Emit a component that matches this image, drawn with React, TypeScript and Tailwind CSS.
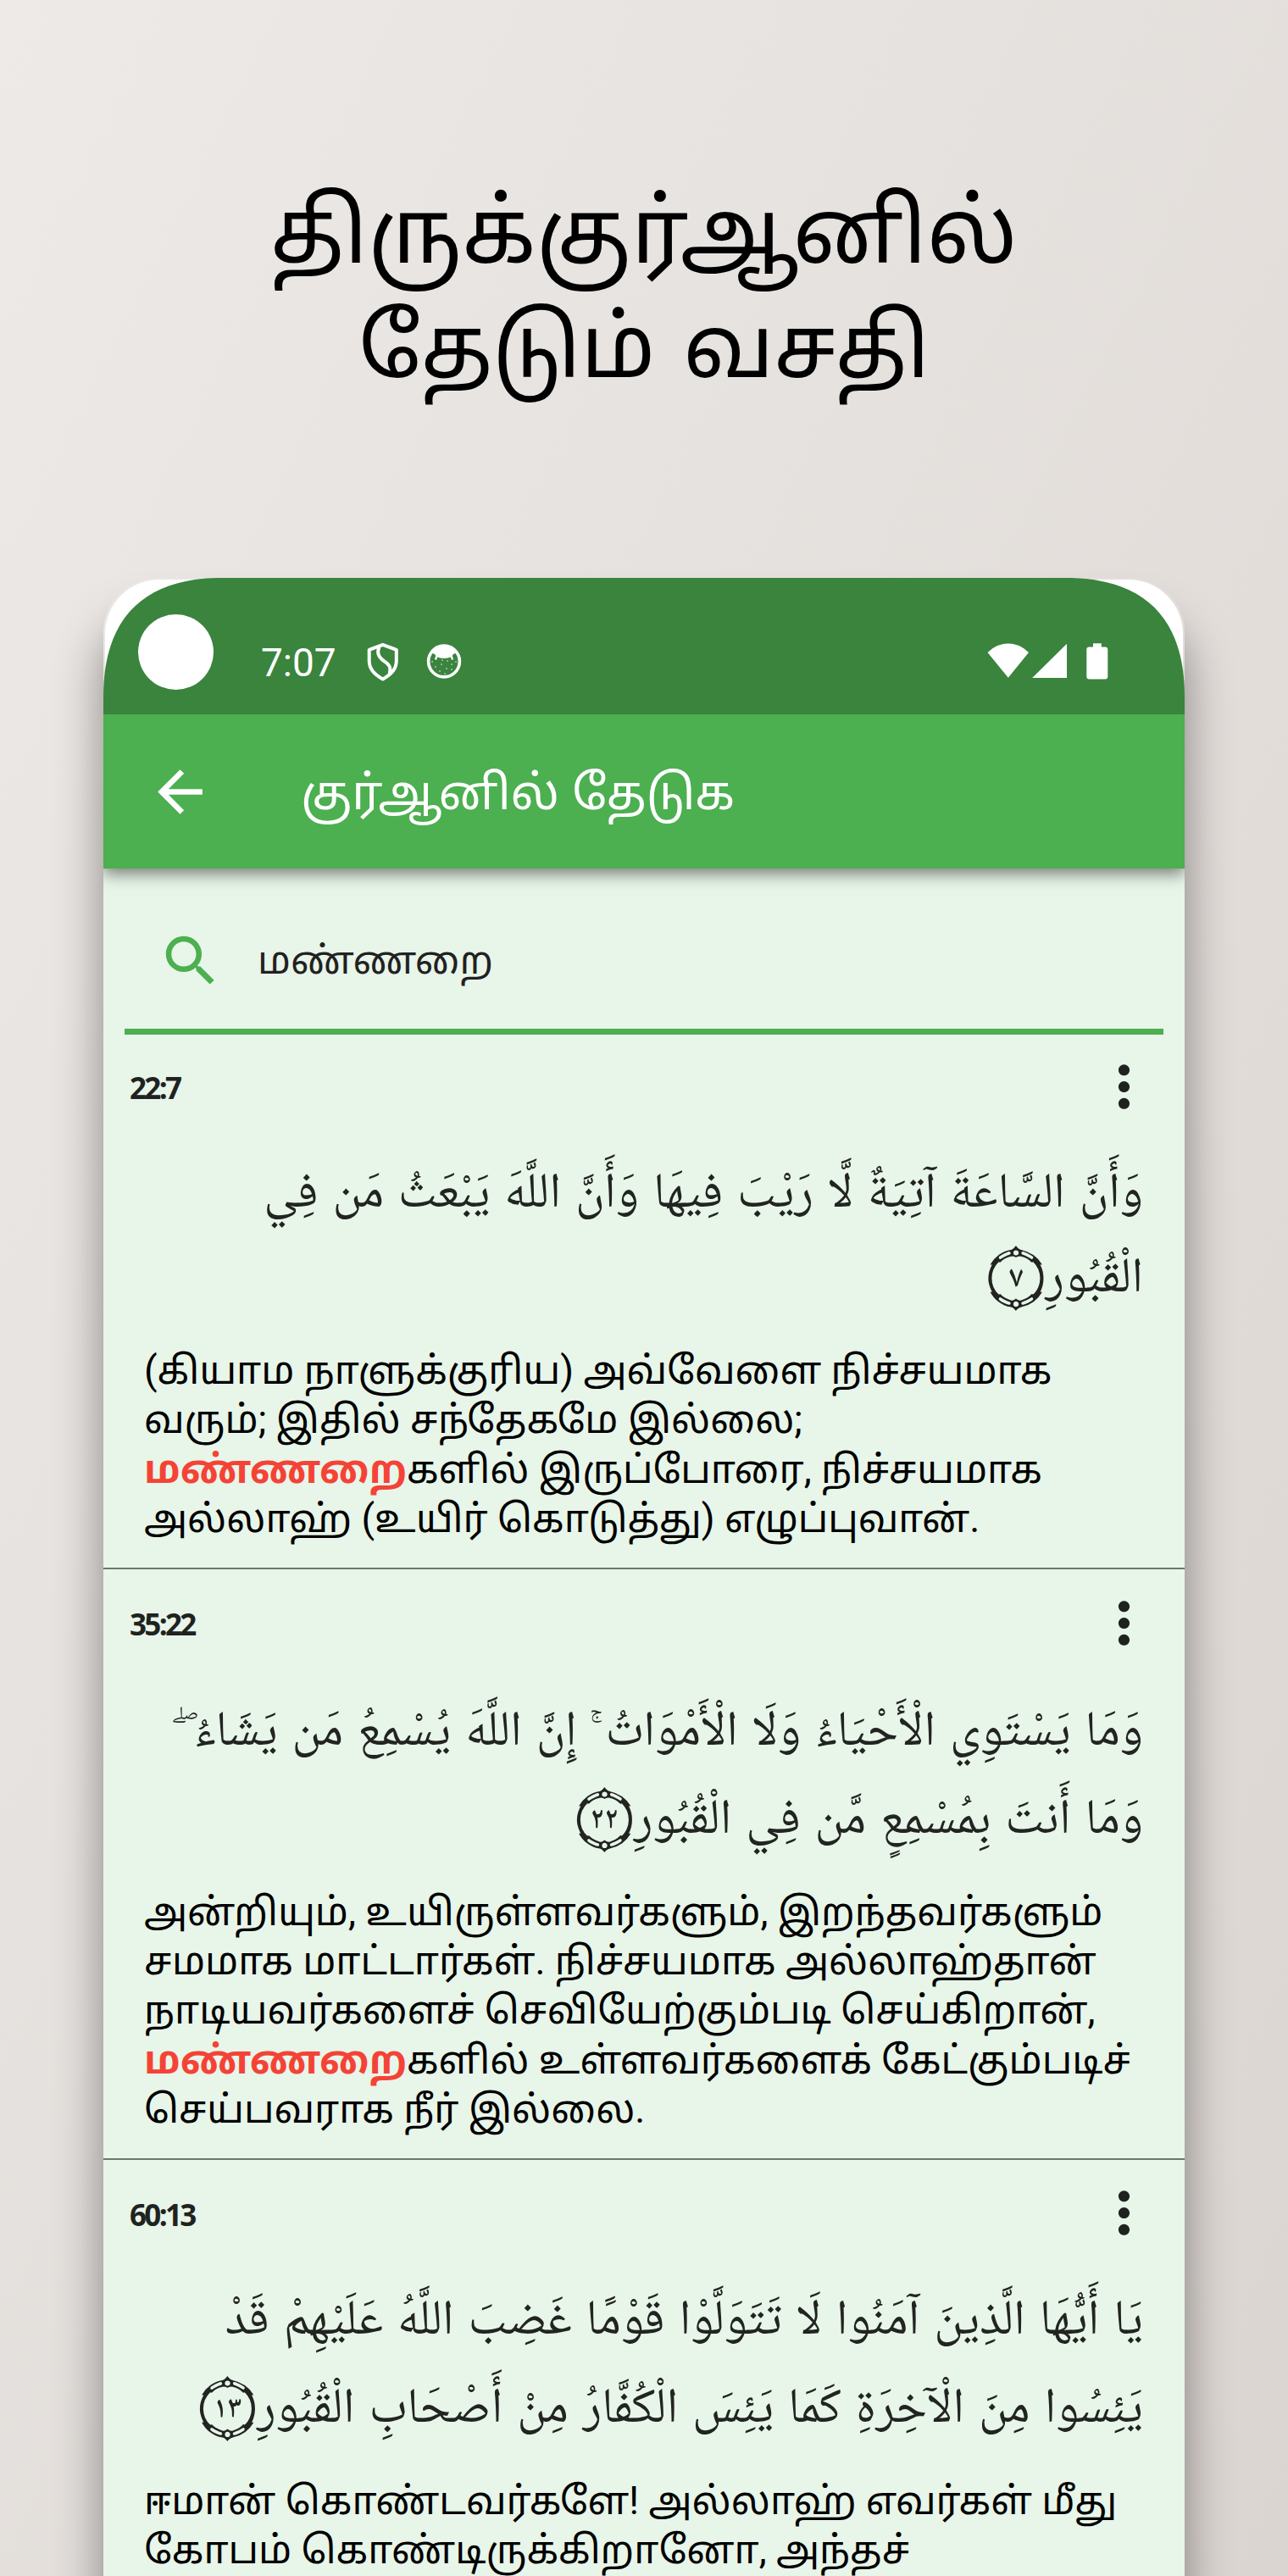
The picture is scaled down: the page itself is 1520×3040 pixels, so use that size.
import type { ReactNode } from "react";

type Verse = {
  id: string;
  arabic: string[];
  mark: string;
  tamil: ReactNode[];
  headerClass: string;
  arabicClass: string;
  tamilClass: string;
};

const Hit = () => <b className="font-bold text-[#f44336]">மண்ணறை</b>;

const verses: Verse[] = [
  {
    id: "22:7",
    arabic: [
      "وَأَنَّ السَّاعَةَ آتِيَةٌ لَّا رَيْبَ فِيهَا وَأَنَّ اللَّهَ يَبْعَثُ مَن فِي",
      "الْقُبُورِ",
    ],
    mark: "۝٧",
    tamil: [
      "(கியாம நாளுக்குரிய) அவ்வேளை நிச்சயமாக",
      "வரும்; இதில் சந்தேகமே இல்லை;",
      <><Hit />களில் இருப்போரை, நிச்சயமாக</>,
      "அல்லாஹ் (உயிர் கொடுத்து) எழுப்புவான்.",
    ],
    headerClass: "h-[122px]",
    arabicClass: "leading-[100px]",
    tamilClass: "mt-[27px]",
  },
  {
    id: "35:22",
    arabic: [
      "وَمَا يَسْتَوِي الْأَحْيَاءُ وَلَا الْأَمْوَاتُ ۚ إِنَّ اللَّهَ يُسْمِعُ مَن يَشَاءُ ۖ",
      "وَمَا أَنتَ بِمُسْمِعٍ مَّن فِي الْقُبُورِ",
    ],
    mark: "۝٢٢",
    tamil: [
      "அன்றியும், உயிருள்ளவர்களும், இறந்தவர்களும்",
      "சமமாக மாட்டார்கள். நிச்சயமாக அல்லாஹ்தான்",
      "நாடியவர்களைச் செவியேற்கும்படி செய்கிறான்,",
      <><Hit />களில் உள்ளவர்களைக் கேட்கும்படிச்</>,
      "செய்பவராக நீர் இல்லை.",
    ],
    headerClass: "h-[124px] pt-[3px]",
    arabicClass: "leading-[104px]",
    tamilClass: "mt-[25px]",
  },
  {
    id: "60:13",
    arabic: [
      "يَا أَيُّهَا الَّذِينَ آمَنُوا لَا تَتَوَلَّوْا قَوْمًا غَضِبَ اللَّهُ عَلَيْهِمْ قَدْ",
      "يَئِسُوا مِنَ الْآخِرَةِ كَمَا يَئِسَ الْكُفَّارُ مِنْ أَصْحَابِ الْقُبُورِ",
    ],
    mark: "۝١٣",
    tamil: [
      "ஈமான் கொண்டவர்களே! அல்லாஹ் எவர்கள் மீது",
      "கோபம் கொண்டிருக்கிறானோ, அந்தச்",
    ],
    headerClass: "h-[122px] pt-[4px]",
    arabicClass: "leading-[104px]",
    tamilClass: "mt-[25px]",
  },
];

function StatusBar() {
  return (
    <div className="flex h-[161px] items-start bg-[#3a843d] pl-[41px] pr-[89px] text-white [clip-path:path('M0_161V140C0_50_45_0_140_0H1136C1231_0_1276_50_1276_140V161Z')]">
      <div className="mt-[43px] size-[89px] rounded-full bg-white" />
      <span className="ml-[56px] mt-[70px] w-[90px] font-['Roboto',sans-serif] text-[46px] leading-[60px]">7:07</span>
      <svg className="ml-[35px] mt-[76px]" width="38" height="46" viewBox="433 758 38 46" fill="none" stroke="white" strokeWidth="4">
        <path d="M451.7 760.8 467.8 766.8V780C467.8 790 460 797 451.7 801.4 443.5 797 435.7 790 435.7 780V766.8Z" strokeLinejoin="round" />
        <path d="M447.5 763C445 770 446 774 451 778.5 458 783.5 462.5 786 459.5 795" />
      </svg>
      <svg className="ml-[32px] mt-[77px]" width="42" height="43" viewBox="503 759 42 43" fill="none">
        <circle cx="524" cy="780.5" r="18.4" stroke="white" strokeWidth="3.6" />
        <path d="M508 770 513 764Q524 758 535 764L540 770 535 772 533 775Q524 779 515 775L513 772Z" fill="white" />
        <path d="M516 772 514 778.5M532 772 534 778.5" stroke="white" strokeWidth="2.4" />
        <path d="M514 787h.1M521 784h.1M528 780h.1M533 784h.1M527 789h.1M519 792h.1M533 790h.1M525 795h.1M510 781h.1M538 781h.1M522 779h.1" stroke="white" strokeWidth="1.4" strokeLinecap="round" />
      </svg>
      <svg className="ml-auto mt-[76px]" width="145" height="45" viewBox="1164 758 145 45" fill="white">
        <path d="M1165.5 770Q1176 759.4 1189.8 759.4T1214 770L1189.8 799.8Z" />
        <path d="M1259 759.7V800H1218.2Z" />
        <path d="M1290 759.2h9.8v4.2h4.5a3 3 0 0 1 3 3v32a3 3 0 0 1-3 3h-19a3 3 0 0 1-3-3v-32a3 3 0 0 1 3-3h4.7Z" />
      </svg>
    </div>
  );
}

function AppBar() {
  return (
    <div className="relative flex h-[182px] items-center bg-[#4caf50] pl-[51px] text-white shadow-[0_6px_18px_rgba(0,0,0,0.5)]">
      <svg className="size-[79px]" viewBox="0 0 24 24" fill="currentColor">
        <path d="M20 11H7.83l5.59-5.59L12 4l-8 8 8 8 1.41-1.41L7.83 13H20v-2z" />
      </svg>
      <h2 className="ml-[103px] pt-[14px] text-[56.8px] leading-[80px]">குர்ஆனில் தேடுக</h2>
    </div>
  );
}

function SearchField() {
  return (
    <div className="mx-[25px] flex h-[196px] items-center border-b-[7px] border-[#4caf50] pl-[39px] pt-[28px]">
      <svg className="size-[78px] text-[#4caf50]" viewBox="0 0 24 24" fill="currentColor">
        <path d="M15.5 14h-.79l-.28-.27A6.471 6.471 0 0 0 16 9.5 6.5 6.5 0 1 0 9.5 16c1.61 0 3.09-.59 4.23-1.57l.27.28v.79l5 4.99L20.49 19l-4.99-5zm-6 0C7.01 14 5 11.99 5 9.5S7.01 5 9.5 5 14 7.01 14 9.5 11.99 14 9.5 14z" />
      </svg>
      <span className="ml-[40px] pt-[9px] text-[45.4px] leading-[60px] text-[#212121]">மண்ணறை</span>
    </div>
  );
}

function VerseCard({ verse }: { verse: Verse }) {
  return (
    <article className="border-b-2 border-[#6f7570] pb-[27px]">
      <header className={`flex items-center justify-between pl-[31px] pr-[32px] text-[#1f231f] ${verse.headerClass}`}>
        <span className="pt-[14px] text-[35px] font-bold leading-[48px] tracking-[-2.7px]">{verse.id}</span>
        <svg className="size-[79px]" viewBox="0 0 24 24" fill="currentColor">
          <path d="M12 8c1.1 0 2-.9 2-2s-.9-2-2-2-2 .9-2 2 .9 2 2 2zm0 2c-1.1 0-2 .9-2 2s.9 2 2 2 2-.9 2-2-.9-2-2-2zm0 6c-1.1 0-2 .9-2 2s.9 2 2 2 2-.9 2-2-.9-2-2-2z" />
        </svg>
      </header>
      <div
        dir="rtl"
        className={`mt-[19px] pr-[49px] font-['Noto_Naskh_Arabic','Noto_Sans',serif] text-[58.2px] text-[#212421] [word-spacing:4px] ${verse.arabicClass}`}
      >
        {verse.arabic.map((line, i) => (
          <p key={line} className="whitespace-nowrap">
            {line}
            {i === verse.arabic.length - 1 && <span className="relative top-[7px] left-[2px]">{verse.mark}</span>}
          </p>
        ))}
      </div>
      <div className={`pl-[48px] font-['Roboto','Noto_Sans_Tamil',sans-serif] text-[45.6px] leading-[58.4px] text-black ${verse.tamilClass}`}>
        {verse.tamil.map((line, i) => (
          <p key={i} className="whitespace-nowrap">{line}</p>
        ))}
      </div>
    </article>
  );
}

export default function App() {
  return (
    <main className="h-[3040px] w-[1520px] overflow-hidden bg-linear-to-br from-[#edeae7] to-[#dbd5d1] font-['Noto_Sans_Tamil','Noto_Sans',sans-serif]">
      <h1 className="flex h-[682px] flex-col items-center pt-[216px] text-center leading-[135px] text-black">
        <span className="text-[105.8px]">திருக்குர்ஆனில்</span>
        <span className="mt-px text-[102.6px] [word-spacing:6px]">தேடும் வசதி</span>
      </h1>
      <section className="relative mx-auto h-[2500px] w-[1276px] rounded-t-[64px] shadow-[0_50px_55px_rgba(0,0,0,0.42)]">
        <div className="absolute inset-x-[2px] top-[2px] h-[158px] rounded-t-[64px] bg-white" />
        <div className="relative">
          <StatusBar />
          <div className="overflow-hidden">
            <AppBar />
            <div className="h-[2200px] bg-[#e8f5e9]">
              <SearchField />
              {verses.map((v) => (
                <VerseCard key={v.id} verse={v} />
              ))}
            </div>
          </div>
        </div>
      </section>
    </main>
  );
}
